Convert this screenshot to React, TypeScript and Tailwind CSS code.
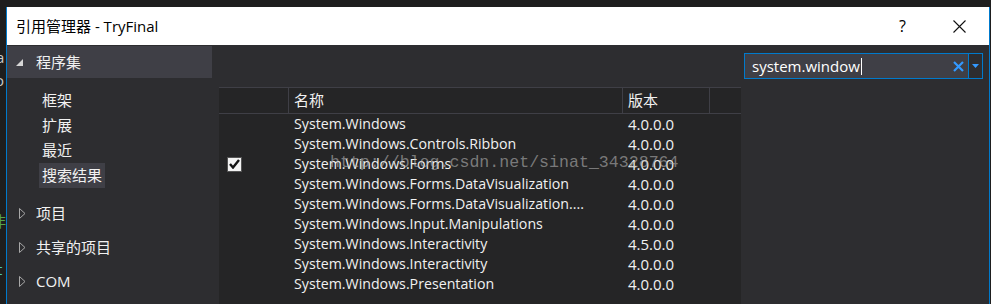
import React from 'react';

const UI_FONT = '"Segoe UI", "Open Sans", "Noto Sans CJK SC", sans-serif';

const assemblies = [
  { name: 'System.Windows', version: '4.0.0.0' },
  { name: 'System.Windows.Controls.Ribbon', version: '4.0.0.0' },
  { name: 'System.Windows.Forms', version: '4.0.0.0', checked: true },
  { name: 'System.Windows.Forms.DataVisualization', version: '4.0.0.0' },
  { name: 'System.Windows.Forms.DataVisualization....', version: '4.0.0.0' },
  { name: 'System.Windows.Input.Manipulations', version: '4.0.0.0' },
  { name: 'System.Windows.Interactivity', version: '4.5.0.0' },
  { name: 'System.Windows.Interactivity', version: '4.0.0.0' },
  { name: 'System.Windows.Presentation', version: '4.0.0.0' },
];

function Collapsed() {
  return (
    <svg width="7" height="11" viewBox="0 0 7 11" className="shrink-0">
      <polygon points="0.5,0.5 6,5.5 0.5,10.5" fill="none" stroke="#a8a8a8" strokeWidth="1" />
    </svg>
  );
}

function CheckBox() {
  return (
    <div className="w-[15px] h-[15px] bg-[#f2f2f2] border border-[#555] flex items-center justify-center">
      <svg width="11" height="10" viewBox="0 0 11 10">
        <path d="M1 5 L4 8.5 L10 1" fill="none" stroke="#111" strokeWidth="2.4" />
      </svg>
    </div>
  );
}

export default function App() {
  return (
    <div
      className="w-[991px] h-[304px] bg-[#1e1e1e] overflow-hidden flex relative"
      style={{ fontFamily: UI_FONT }}
    >
      {/* IDE behind the dialog */}
      <div className="w-[6px] h-full relative overflow-hidden text-[15px] leading-none">
        <span className="absolute left-[-4px] top-[50px] text-[#c8c8c8]">a</span>
        <span className="absolute left-[-5px] top-[73px] text-[#c8c8c8]">o</span>
        <span className="absolute left-[-9px] top-[214px] text-[#57a64a]">非</span>
        <span className="absolute left-[-3px] top-[262px] text-[#4ec9b0]">t</span>
      </div>

      <div className="flex flex-col w-[984px] mt-[7px] border-x border-[#007acc]">
        {/* title bar */}
        <div className="h-[38px] bg-white flex items-center pl-[9px] text-[15px] text-black shrink-0">
          <span className="flex-1">引用管理器 - TryFinal</span>
          <span className="w-[12px] text-[16px] leading-none mr-[42px]">?</span>
          <svg width="13" height="13" viewBox="0 0 13 13" className="mr-[23px]">
            <path d="M0.5 0.5 L12.5 12.5 M12.5 0.5 L0.5 12.5" stroke="#111" strokeWidth="1.1" />
          </svg>
        </div>

        {/* body */}
        <div className="flex flex-1 bg-[#2d2d30] text-[#f1f1f1] text-[15px]">
          {/* left tree */}
          <div className="w-[205px] pt-[1px] flex flex-col shrink-0">
            <div className="h-[32px] bg-[#3f3f46] flex items-center pl-[9px]">
              <svg width="7" height="7" viewBox="0 0 7 7" className="shrink-0">
                <polygon points="7,0 7,7 0,7" fill="#d6d6d6" />
              </svg>
              <span className="ml-[13px]">程序集</span>
            </div>
            <div className="mt-[10px] flex flex-col pl-[32px]">
              {['框架', '扩展', '最近'].map((t) => (
                <div key={t} className="h-[25px] flex items-center">
                  <span className="px-[3px]">{t}</span>
                </div>
              ))}
              <div className="h-[25px] flex items-center">
                <span className="px-[3px] h-[25px] flex items-center bg-[#3f3f46]">搜索结果</span>
              </div>
            </div>
            <div className="mt-[8px] flex flex-col">
              {['项目', '共享的项目', 'COM'].map((t) => (
                <div key={t} className="h-[34px] flex items-center pl-[12px] gap-[10px]">
                  <Collapsed />
                  <span>{t}</span>
                </div>
              ))}
            </div>
          </div>

          {/* list */}
          <div className="w-[529px] pt-[42px] pl-[7px] flex flex-col shrink-0">
            <div className="flex-1 bg-[#252526] flex flex-col">
              <div className="h-[27px] border-y border-[#3f3f46] flex shrink-0">
                <div className="w-[69px]" />
                <div className="w-[334px] border-l border-[#3f3f46] pl-[5px] flex items-center">名称</div>
                <div className="w-[87px] border-l border-[#3f3f46] pl-[5px] flex items-center">版本</div>
                <div className="flex-1 border-l border-[#3f3f46]" />
              </div>
              {assemblies.map((a, i) => (
                <div key={i} className="h-[20px] flex items-center shrink-0">
                  <div className="w-[69px] pl-[8px] flex items-center">{a.checked && <CheckBox />}</div>
                  <div className="w-[334px] pl-[6px] whitespace-nowrap text-[14.2px]">{a.name}</div>
                  <div className="w-[87px] pl-[6px]">{a.version}</div>
                </div>
              ))}
            </div>
          </div>

          {/* search */}
          <div className="flex-1 pt-[8px] pl-[3px]">
            <div className="w-[239px] h-[26px] border border-[#007acc] flex">
              <div className="flex-1 bg-[#3f3f46] flex items-center pl-[7px] pr-[4px]">
                <span className="text-white">system.window</span>
                <span className="w-px h-[17px] bg-white ml-[1px]" />
                <span className="flex-1" />
                <svg width="11" height="11" viewBox="0 0 11 11">
                  <path d="M1 1 L10 10 M10 1 L1 10" stroke="#3399ff" strokeWidth="2.2" />
                </svg>
              </div>
              <div className="w-[14px] border-l border-[#007acc] flex items-center justify-center">
                <svg width="7" height="4" viewBox="0 0 7 4">
                  <polygon points="0,0 7,0 3.5,4" fill="#3399ff" />
                </svg>
              </div>
            </div>
          </div>
        </div>
      </div>

      {/* blog watermark */}
      <span
        className="absolute left-[330px] top-[155px] text-[16.6px] leading-none text-[#b4b4b4]/60 whitespace-nowrap pointer-events-none"
        style={{ fontFamily: '"Liberation Mono", monospace' }}
      >
        http://blog.csdn.net/sinat_34328764
      </span>
    </div>
  );
}
